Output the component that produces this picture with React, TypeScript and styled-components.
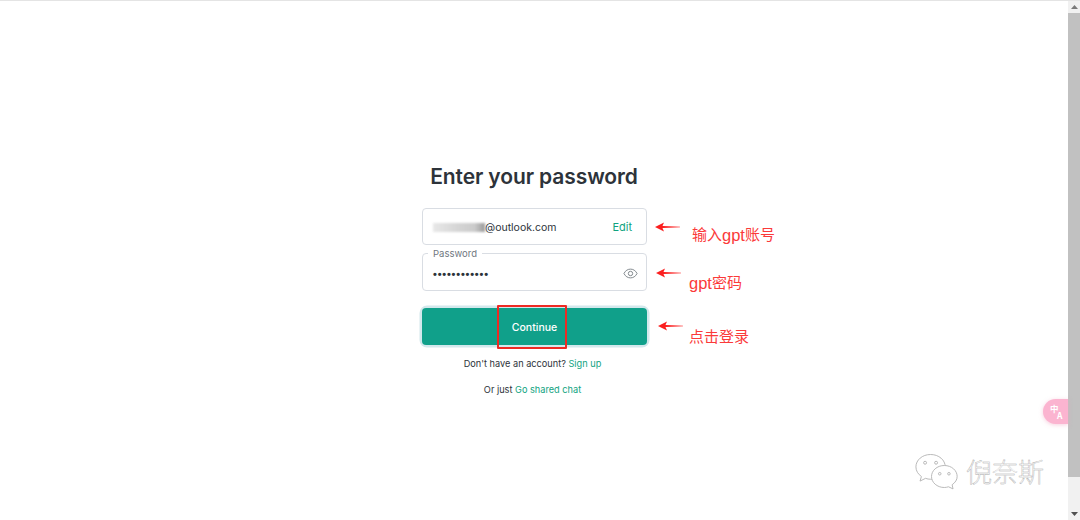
import React from "react"
import styled, { createGlobalStyle } from "styled-components"

const GlobalStyle = createGlobalStyle`
  html, body {
    margin: 0;
    padding: 0;
    height: 520px;
    overflow: hidden;
    background: #ffffff;
    font-family: Inter, "Noto Sans", "Liberation Sans", sans-serif;
  }
`

const Page = styled.div`
  position: relative;
  display: flex;
  width: 1080px;
  height: 520px;
  overflow: hidden;
  border-top: 1px solid #e4e4e4;
  box-sizing: border-box;
`

const Main = styled.main`
  flex: 1;
  display: flex;
  flex-direction: column;
  align-items: center;
  padding-top: 162px;
`

const Title = styled.h1`
  margin: 0 0 17px;
  font-size: 21px;
  line-height: 28px;
  font-weight: 600;
  letter-spacing: -0.1px;
  color: #2d333a;
`

const Form = styled.form`
  width: 225px;
  margin-left: 1px;
  display: flex;
  flex-direction: column;
`

const Field = styled.div<{ $height: number }>`
  position: relative;
  height: ${(p) => p.$height}px;
  box-sizing: border-box;
  display: flex;
  align-items: center;
  justify-content: space-between;
  border: 1px solid #d9dde3;
  border-radius: 4px;
  padding: 1px 14px 0 10px;
  margin-bottom: 8px;
`

const EmailValue = styled.div`
  display: flex;
  align-items: center;
  font-size: 10.5px;
  color: #2d333a;
`

const BlurredName = styled.span`
  width: 52px;
  height: 9px;
  background: linear-gradient(90deg, #e8e8e8 0%, #d6d6d6 45%, #cbcbcb 80%, #9a9a9a 100%);
  filter: blur(1.2px);
`

const EditLink = styled.a`
  font-size: 11px;
  color: #10a37f;
`

const FloatLabel = styled.label`
  position: absolute;
  top: -6px;
  left: 5px;
  padding: 0 5px;
  background: #ffffff;
  font-size: 9.5px;
  line-height: 12px;
  color: #6f7780;
`

const Dots = styled.span`
  font-family: "Liberation Sans", sans-serif;
  font-size: 11px;
  letter-spacing: 0.8px;
  font-weight: 700;
  color: #2d333a;
  margin-top: 2px;
`

const EyeButton = styled.span`
  display: flex;
  margin-right: -6px;
  margin-top: 1px;
  color: #7b8288;
`

const SubmitRing = styled.div`
  margin-top: 9px;
  padding: 0;
  border-radius: 5px;
  box-shadow: 0 0 0 2.5px #d3e8ec;
`

const Submit = styled.button`
  display: block;
  width: 100%;
  height: 37px;
  border: none;
  border-radius: 4px;
  padding: 1px 0 0;
  background: #10a08a;
  color: #ffffff;
  font-family: inherit;
  font-size: 10.5px;
  font-weight: 500;
`

const Hint = styled.p<{ $top: number }>`
  margin: ${(p) => p.$top}px 0 0;
  padding-right: 4px;
  text-align: center;
  font-size: 9.2px;
  line-height: 12px;
  color: #2d333a;
`

const Link = styled.a`
  color: #10a37f;
`

const ScrollBar = styled.div`
  width: 12px;
  display: flex;
  flex-direction: column;
  background: #f1f1f1;
`

const ScrollArrow = styled.div`
  height: 12px;
  display: flex;
  align-items: center;
  justify-content: center;
`

const ScrollThumb = styled.div`
  height: 464px;
  background: #c1c1c1;
`

const ScrollRest = styled.div`
  flex: 1;
`

const RedBox = styled.div`
  position: absolute;
  left: 497px;
  top: 304px;
  width: 70px;
  height: 44px;
  box-sizing: border-box;
  border: 2px solid #ee2a24;
  border-radius: 1px;
`

const Note = styled.div<{ $x: number; $y: number }>`
  position: absolute;
  left: ${(p) => p.$x}px;
  top: ${(p) => p.$y}px;
  display: flex;
  align-items: center;
  font-family: "Liberation Sans", "Noto Sans CJK SC", sans-serif;
  font-size: 15px;
  line-height: 20px;
  color: #fb3a3a;
  white-space: nowrap;
`

const NoteLatin = styled.span`
  font-size: 16.5px;
`

const Arrow = styled.svg<{ $x: number; $y: number }>`
  position: absolute;
  left: ${(p) => p.$x}px;
  top: ${(p) => p.$y}px;
`

const TranslateBadge = styled.div`
  position: absolute;
  left: 1043px;
  top: 398px;
  width: 25px;
  height: 25px;
  box-sizing: border-box;
  padding-left: 7px;
  display: grid;
  grid-template-columns: 7px 7px;
  grid-template-rows: 7px 7px;
  align-content: center;
  background: #fbb4d0;
  border-radius: 13px 0 0 13px;
  box-shadow: 0 1px 4px rgba(240, 160, 190, 0.5);
  color: #ffffff;
  font-family: "Noto Sans CJK SC", "Liberation Sans", sans-serif;
  font-size: 8.5px;
  line-height: 7px;
  font-weight: 700;
`

const BadgeHan = styled.span`
  grid-column: 1;
  grid-row: 1;
`

const BadgeLatin = styled.span`
  grid-column: 2;
  grid-row: 2;
`

const Watermark = styled.div`
  position: absolute;
  left: 915px;
  top: 450px;
  display: flex;
  align-items: center;
  gap: 7px;
`

const WatermarkText = styled.span`
  font-family: "Noto Sans CJK SC", sans-serif;
  font-size: 26px;
  line-height: 40px;
  font-weight: 300;
  color: #ffffff;
  -webkit-text-stroke: 0.4px #a8a8a8;
`

const RedArrow = ({ x, y }: { x: number; y: number }) => (
  <Arrow $x={x} $y={y} width="26" height="10" viewBox="0 0 26 10">
    <path d="M0 5 L9 0.5 L7.5 4 L25 4.7 L25 5.3 L7.5 6 L9 9.5 Z" fill="#fb1f1f" />
  </Arrow>
)

const WechatMark = () => (
  <svg width="44" height="38" viewBox="0 0 48 40" fill="#ffffff" stroke="#b4b4b4" strokeWidth="1">
    <path d="M17 2 C8 2 1 8 1 15.500 C1 20 3.500 23.500 7 26 L5.500 31 L11.500 28 C13.500 28.700 15 29 17 29 C26 29 33 23 33 15.500 C33 8 26 2 17 2 Z" />
    <circle cx="11" cy="11" r="1.600" />
    <circle cx="23" cy="11" r="1.600" />
    <path d="M32 14 C24 14 18 19.500 18 26 C18 32.500 24 38 32 38 C33.500 38 35 37.700 36.500 37.200 L41.500 39.500 L40.500 35 C44 32.500 46 29.500 46 26 C46 19.500 40 14 32 14 Z" />
    <circle cx="27" cy="23" r="1.400" />
    <circle cx="37" cy="23" r="1.400" />
  </svg>
)

export default function App() {
  return (
    <Page>
      <GlobalStyle />
      <Main>
        <Title>Enter your password</Title>
        <Form>
          <Field $height={37}>
            <EmailValue>
              <BlurredName />
              @outlook.com
            </EmailValue>
            <EditLink>Edit</EditLink>
          </Field>
          <Field $height={38}>
            <FloatLabel>Password</FloatLabel>
            <Dots>••••••••••••</Dots>
            <EyeButton>
              <svg width="15" height="15" viewBox="0 0 24 24" fill="none" stroke="currentColor" strokeWidth="1.500">
                <path d="M1.500 12 C4 7 8 5 12 5 C16 5 20 7 22.500 12 C20 17 16 19 12 19 C8 19 4 17 1.500 12 Z" />
                <circle cx="12" cy="12" r="3.500" />
              </svg>
            </EyeButton>
          </Field>
          <SubmitRing>
            <Submit type="button">Continue</Submit>
          </SubmitRing>
          <Hint $top={13}>
            Don't have an account? <Link>Sign up</Link>
          </Hint>
          <Hint $top={14}>
            Or just <Link>Go shared chat</Link>
          </Hint>
        </Form>
      </Main>
      <ScrollBar>
        <ScrollArrow>
          <svg width="7" height="4" viewBox="0 0 7 4">
            <path d="M3.500 0 L7 4 L0 4 Z" fill="#7a7a7a" />
          </svg>
        </ScrollArrow>
        <ScrollThumb />
        <ScrollRest />
        <ScrollArrow>
          <svg width="7" height="4" viewBox="0 0 7 4">
            <path d="M0 0 L7 0 L3.500 4 Z" fill="#505050" />
          </svg>
        </ScrollArrow>
      </ScrollBar>

      <RedBox />
      <RedArrow x={655} y={221} />
      <RedArrow x={656} y={267} />
      <RedArrow x={658} y={320} />
      <Note $x={692} $y={224}>输入<NoteLatin>gpt</NoteLatin>账号</Note>
      <Note $x={689} $y={272}><NoteLatin>gpt</NoteLatin>密码</Note>
      <Note $x={689} $y={326}>点击登录</Note>

      <TranslateBadge>
        <BadgeHan>中</BadgeHan>
        <BadgeLatin>A</BadgeLatin>
      </TranslateBadge>
      <Watermark>
        <WechatMark />
        <WatermarkText>倪奈斯</WatermarkText>
      </Watermark>
    </Page>
  )
}
